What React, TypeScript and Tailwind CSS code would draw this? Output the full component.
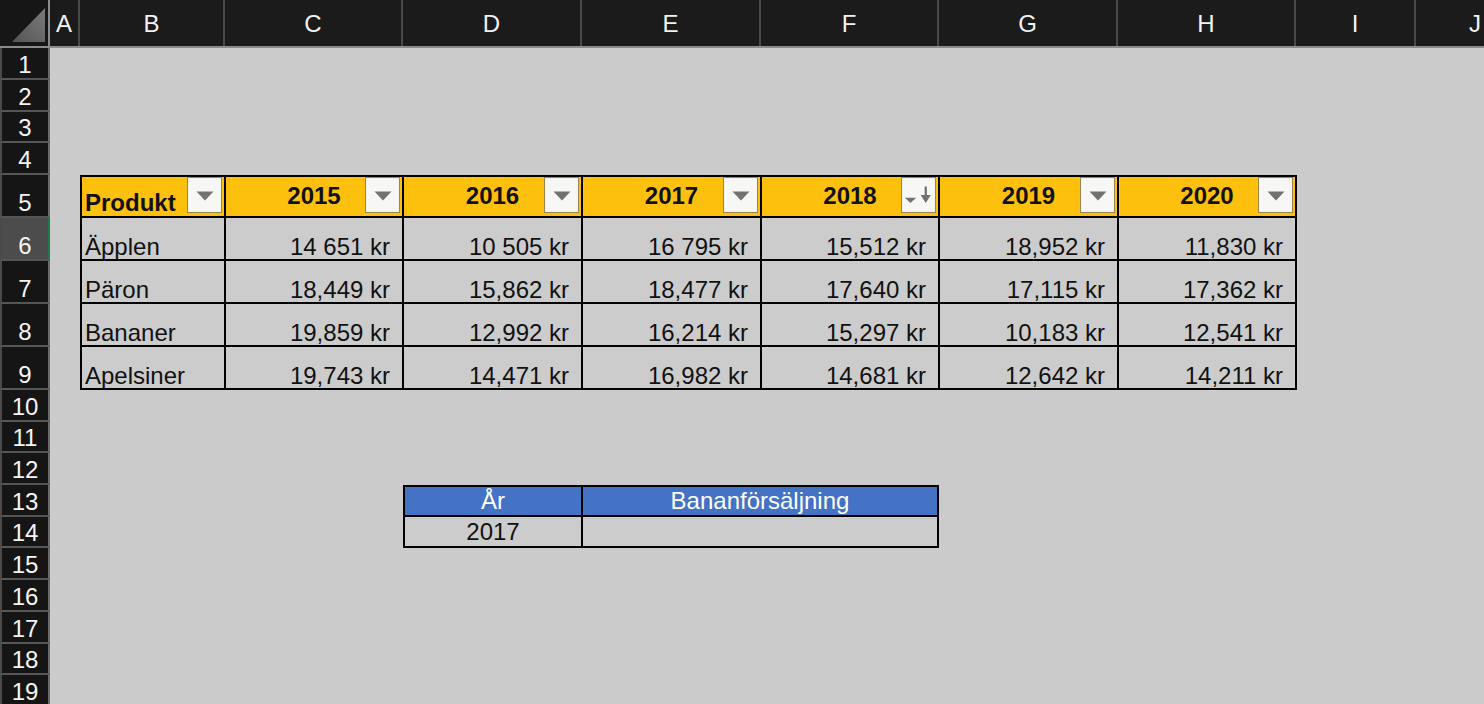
import React from "react";

const cols = [
  { l: "A", c: "w-[30px]" },
  { l: "B", c: "w-[145px]" },
  { l: "C", c: "w-[178px]" },
  { l: "D", c: "w-[179px]" },
  { l: "E", c: "w-[179px]" },
  { l: "F", c: "w-[178px]" },
  { l: "G", c: "w-[179px]" },
  { l: "H", c: "w-[178px]" },
  { l: "I", c: "w-[120px]" },
  { l: "J", c: "w-[120px]" },
];

const rowHeights: string[] = [
  "h-[31.75px]", "h-[31.75px]", "h-[31.75px]", "h-[31.75px]",
  "h-[43px]", "h-[43px]", "h-[43px]", "h-[43px]", "h-[43px]",
  "h-[31.7px]", "h-[31.7px]", "h-[31.7px]", "h-[31.7px]", "h-[31.7px]",
  "h-[31.7px]", "h-[31.7px]", "h-[31.7px]", "h-[31.7px]", "h-[31.7px]",
];

const years = ["2015", "2016", "2017", "2018", "2019", "2020"];

const data: string[][] = [
  ["Äpplen", "14 651 kr", "10 505 kr", "16 795 kr", "15,512 kr", "18,952 kr", "11,830 kr"],
  ["Päron", "18,449 kr", "15,862 kr", "18,477 kr", "17,640 kr", "17,115 kr", "17,362 kr"],
  ["Bananer", "19,859 kr", "12,992 kr", "16,214 kr", "15,297 kr", "10,183 kr", "12,541 kr"],
  ["Apelsiner", "19,743 kr", "14,471 kr", "16,982 kr", "14,681 kr", "12,642 kr", "14,211 kr"],
];

function FilterButton({ sorted }: { sorted?: boolean }) {
  return (
    <div className="absolute right-[2px] top-0 flex h-[36px] w-[35px] items-center justify-center border border-[#9a8650] bg-[#f7f7f5] shadow-[inset_0_0_1px_rgba(0,0,0,0.2)]">
      {sorted ? (
        <svg width="35" height="36" viewBox="0 0 35 36">
          <polygon points="3,21 15,21 9,26.5" fill="#727272" />
          <rect x="24" y="9" width="2.4" height="12" fill="#727272" />
          <polygon points="19.8,18 30.6,18 25.2,26.5" fill="#727272" />
        </svg>
      ) : (
        <svg width="18" height="10" viewBox="0 0 18 10" className="mt-[1px]">
          <polygon points="0.5,0.5 17.5,0.5 9,9.5" fill="#727272" />
        </svg>
      )}
    </div>
  );
}

export default function App() {
  return (
    <div className="flex h-[704px] w-[1484px] flex-col overflow-hidden bg-[#cbcbcb] font-['Liberation_Sans',Arial,sans-serif]">
      {/* Column headers */}
      <div className="flex h-[48px] shrink-0 border-b-2 border-[#8c8c8c] bg-[#1b1b1b]">
        <div className="relative h-full w-[50px] shrink-0 border-r-2 border-[#8c8c8c] bg-[#161616]">
          <svg width="48" height="46" viewBox="0 0 48 46" className="absolute left-0 top-0">
            <defs>
              <linearGradient id="cornerg" x1="0" y1="1" x2="1" y2="0">
                <stop offset="0" stopColor="#555555" />
                <stop offset="1" stopColor="#7a7a7a" />
              </linearGradient>
            </defs>
            <polygon points="12,42 45,42 45,8" fill="url(#cornerg)" />
          </svg>
        </div>
        {cols.map((c) => (
          <div
            key={c.l}
            className={`${c.c} flex h-full shrink-0 items-center justify-center border-r-2 border-[#4a4a4a] pt-[1px] text-[24px] leading-[24px] text-[#f2f2f2]`}
          >
            {c.l}
          </div>
        ))}
      </div>

      <div className="flex flex-1">
        {/* Row headers */}
        <div className="flex w-[50px] shrink-0 flex-col">
          {rowHeights.map((h, i) => (
            <div
              key={i}
              className={`${h} flex shrink-0 items-end justify-center border-b-2 border-l-2 border-r-2 border-b-[#565656] border-l-[#4a4a4a] pb-[1px] text-[24px] leading-[24px] text-[#f4f4f4] ${
                i === 5 ? "border-r-[#1f7a47] bg-[#4c4c4c]" : "border-r-[#6a6a6a] bg-[#151515]"
              }`}
            >
              {i + 1}
            </div>
          ))}
        </div>

        {/* Sheet */}
        <div className="flex flex-1 flex-col text-[24px] leading-[24px] text-[#111]">
          <div className="h-[127px] shrink-0" />

          <div className="ml-[30px] grid w-max shrink-0 grid-cols-[142px_176px_177px_177px_176px_177px_176px] grid-rows-[39px_41px_41px_41px_41px] gap-[2px] bg-black p-[2px]">
            <div className="relative flex items-end bg-[#fdc00c] pb-[1px] pl-[3px] font-bold">
              Produkt
              <FilterButton />
            </div>
            {years.map((y) => (
              <div key={y} className="relative bg-[#fdc00c] pt-[7px] text-center font-bold">
                {y}
                <FilterButton sorted={y === "2018"} />
              </div>
            ))}
            {data.map((row) =>
              row.map((v, j) =>
                j === 0 ? (
                  <div key={row[0] + j} className="flex items-end bg-[#cccccc] pl-[3px]">
                    {v}
                  </div>
                ) : (
                  <div key={row[0] + j} className="flex items-end justify-end bg-[#cccccc] pr-[12px]">
                    {v}
                  </div>
                )
              )
            )}
          </div>

          <div className="h-[95px] shrink-0" />

          <div className="ml-[353px] grid w-max shrink-0 grid-cols-[176px_354px] grid-rows-[28px_29px] gap-[2px] bg-black p-[2px]">
            <div className="flex items-center justify-center bg-[#4472c4] text-white">År</div>
            <div className="flex items-center justify-center bg-[#4472c4] text-white">Bananförsäljning</div>
            <div className="flex items-center justify-center bg-[#cccccc] pt-[1px]">2017</div>
            <div className="bg-[#cccccc]" />
          </div>
        </div>
      </div>
    </div>
  );
}
